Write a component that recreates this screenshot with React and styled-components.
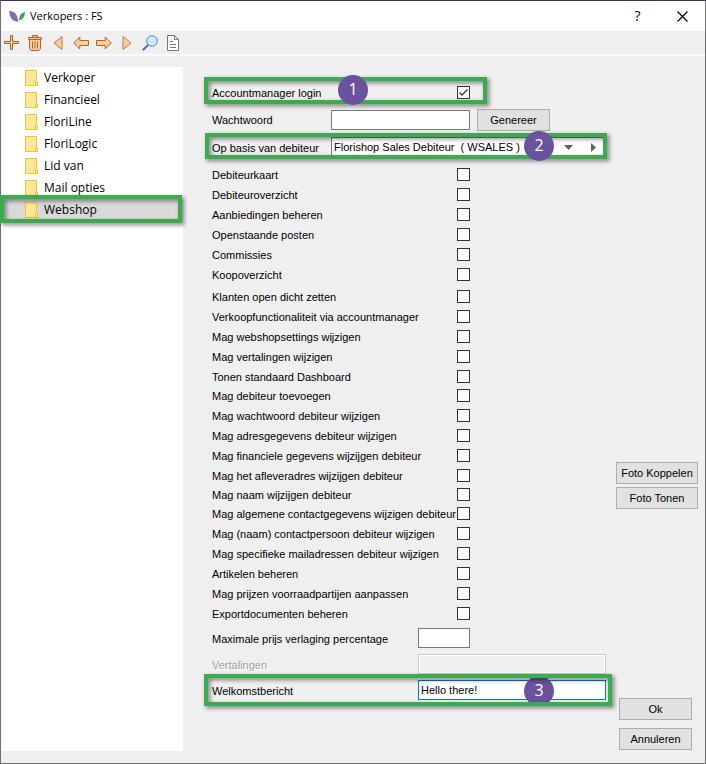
import React from "react";
import styled, { createGlobalStyle, css } from "styled-components";

const GlobalStyle = createGlobalStyle`
  *, *::before, *::after { box-sizing: border-box; }
  body { margin: 0; background: #efefef; }
  body, button, input, select { font: 11px/14px "Liberation Sans", Arial, sans-serif; color: #000; }
`;

const Window = styled.div`
  display: flex;
  flex-direction: column;
  min-height: 100vh;
  background: #efefef;
  border: 1px solid #707070;
  border-top-color: #3a2f4c;
`;

const TitleBar = styled.header`
  display: flex;
  align-items: center;
  height: 30px;
  padding-left: 8px;
  background: #fff;
`;

const Title = styled.h1`
  flex: 1;
  margin: 0 0 0 4px;
  font: 11px/16px "Open Sans", "Noto Sans", sans-serif;
`;

const CaptionButton = styled.button`
  display: grid;
  place-items: center;
  width: 45px;
  height: 30px;
  padding: 0;
  border: 0;
  background: none;
  font: 500 14px/16px "Open Sans", sans-serif;
`;

const Toolbar = styled.nav`
  display: flex;
  height: 25px;
  border-bottom: 2px solid #fbfbff;
`;

const ToolButton = styled.button`
  display: grid;
  place-items: center;
  width: 23px;
  height: 24px;
  padding: 0 2px 0 0;
  border: 0;
  background: none;
`;

const Body = styled.div`
  display: flex;
  flex: 1;
  padding: 11px 7px 12px 0;
`;

const Sidebar = styled.ul`
  width: 182px;
  flex: none;
  margin: 0;
  padding: 0;
  list-style: none;
  background: #fff;
`;

const SidebarItem = styled.li`
  position: relative;
`;

const SidebarButton = styled.button`
  display: flex;
  align-items: center;
  gap: 6px;
  width: 100%;
  height: 22px;
  padding: 0 0 0 24px;
  border: 0;
  background: ${(p) => (p.$selected ? "#d9d9d9" : "transparent")};
  font: 12px/16px "Open Sans", "Noto Sans", sans-serif;
  text-align: left;
`;

const Form = styled.form`
  flex: 1;
  min-width: 0;
  padding: 16px 0 0 29px;
`;

const Row = styled.div`
  position: relative;
  display: flex;
  align-items: flex-start;
  height: ${(p) => p.$height || 20}px;
  margin-top: ${(p) => p.$gap || 0}px;
`;

const Label = styled.label`
  flex: none;
  width: ${(p) => p.$width}px;
  padding-top: 3px;
  white-space: nowrap;
`;

const FieldLabel = styled(Label)`
  padding-top: 4px;
  ${(p) =>
    p.$disabled &&
    css`
      color: #a0a0a0;
      text-shadow: 1px 1px 0 #fff;
    `}
`;

const Checkbox = styled.input`
  appearance: none;
  flex: none;
  width: 13px;
  height: 13px;
  margin: 3px 0 0;
  border: 1px solid #333;
  background: #fff;
  &:checked {
    background: #fff
      url("data:image/svg+xml,%3Csvg xmlns='http://www.w3.org/2000/svg' viewBox='0 0 11 11'%3E%3Cpath d='M1.5 5.5L4 8L9.5 2.5' fill='none' stroke='%23333' stroke-width='1.3'/%3E%3C/svg%3E");
  }
`;

const Input = styled.input`
  width: ${(p) => p.$width}px;
  height: 20px;
  padding: 0 2px;
  border: 1px solid ${(p) => (p.$active ? "#0078d7" : "#7a7a7a")};
  background: #fff;
  outline: 0;
  &:disabled {
    border-color: #ccc;
    background: #efefef;
    box-shadow: inset 0 0 0 1px #fff;
  }
`;

const SelectBox = styled.div`
  display: flex;
  width: 274px;
  height: 20px;
  border: 1px solid #7a7a7a;
  background: #fff;
`;

const Select = styled.select`
  appearance: none;
  flex: 1;
  padding: 0 26px 0 2px;
  border: 0;
  background: url("data:image/svg+xml,%3Csvg xmlns='http://www.w3.org/2000/svg' width='9' height='5'%3E%3Cpath d='M0 0H9L4.5 5Z' fill='%23606060'/%3E%3C/svg%3E")
    no-repeat right 9px center;
`;

const NextButton = styled.button`
  display: grid;
  place-items: center;
  width: 22px;
  padding: 0;
  border: 0;
  background: none;
`;

const Button = styled.button`
  width: ${(p) => p.$width || 73}px;
  height: 22px;
  padding: 0;
  border: 1px solid #adadad;
  background: #e1e1e1;
  white-space: nowrap;
`;

const GenerateButton = styled(Button)`
  margin-left: 7px;
  margin-top: -1px;
`;

const Actions = styled.div`
  display: flex;
  flex-direction: column;
  align-items: flex-end;
  width: 82px;
  flex: none;
  padding-top: 395px;
`;

const PhotoActions = styled.div`
  display: grid;
  gap: 3px;
`;

const DialogActions = styled.div`
  display: grid;
  gap: 8px;
  margin: auto 6px 1px 0;
`;

const Callout = styled.div`
  position: absolute;
  z-index: 2;
  top: ${(p) => p.$top}px;
  left: ${(p) => p.$left}px;
  width: ${(p) => p.$width}px;
  height: ${(p) => p.$height}px;
  border: 4px solid #3aab4f;
  filter: drop-shadow(2px 2px 2px rgba(0, 0, 0, 0.5));
  pointer-events: none;
`;

const Badge = styled.span`
  position: absolute;
  z-index: ${(p) => (p.$under ? 1 : 3)};
  top: ${(p) => p.$top}px;
  left: ${(p) => p.$left}px;
  width: 30px;
  height: 30px;
  border-radius: 50%;
  background: #6b529f;
  color: #fff;
  font: 16px/29px "Open Sans", sans-serif;
  text-align: center;
`;

const Peach = ({ children, ...rest }) => (
  <svg width="16" height="16" fill="#ffcc99" stroke="#a9652c" {...rest}>
    {children}
  </svg>
);

const tools = [
  ["Toevoegen", <Peach><path d="M6.500.5h2v6h6v2h-6v6h-2v-6h-6v-2h6z" /></Peach>],
  ["Verwijderen", (
    <Peach>
      <path d="M2.500 4.500h11v9l-1.500 2H4l-1.500-2z" />
      <path d="M1.500 2.500h13v2h-13zM5.500 2.500v-2h5v2M5.500 6.500v7M8 6.500v7M10.500 6.500v7" />
    </Peach>
  )],
  ["Eerste", <Peach stroke="#b18045"><path d="M12 1.500v13L4 8z" /></Peach>],
  ["Vorige", <Peach><path d="M.8 8l6-6v3.500h8.700v5H6.800V14z" /></Peach>],
  ["Volgende", <Peach><path d="M15.200 8l-6-6v3.500H.5v5h8.700V14z" /></Peach>],
  ["Laatste", <Peach stroke="#b18045"><path d="M4 1.500v13l8-6.500z" /></Peach>],
  ["Zoeken", (
    <svg width="16" height="16" fill="none">
      <path d="M.8 15.200l5.700-5.700" stroke="#4874c8" strokeWidth="2" />
      <circle cx="10" cy="6" r="5.300" fill="#cbeaff" stroke="#5585cf" />
    </svg>
  )],
  ["Document", (
    <svg width="16" height="16" fill="#fff" stroke="#777">
      <path d="M2.500.5h7l4 4v11h-11zM9.500.5v4h4" />
      <path d="M5 6.500h3M5 9.500h6M5 12.500h6" />
    </svg>
  )],
];

const FolderIcon = () => (
  <svg width="13" height="16">
    <path d="M.5.500h11v10l1 1v4H.5z" fill="#ffe699" stroke="#edc52f" />
    <path d="M10.500 15.500v-4l1-1" fill="none" stroke="#edc52f" />
  </svg>
);

const Logo = () => (
  <svg width="17" height="13">
    <path d="M0 1Q8 0 9.500 12Q1 12 0 1Z" fill="#8e69ae" />
    <path d="M16 2Q10 3 10 10.500Q16 9 16 2Z" fill="#38a355" />
  </svg>
);

const sections = ["Verkoper", "Financieel", "FloriLine", "FloriLogic", "Lid van", "Mail opties", "Webshop"];

const permissions = [
  { text: "Debiteurkaart", gap: 8 },
  { text: "Debiteuroverzicht" },
  { text: "Aanbiedingen beheren" },
  { text: "Openstaande posten" },
  { text: "Commissies" },
  { text: "Koopoverzicht" },
  { text: "Klanten open dicht zetten", gap: 2 },
  { text: "Verkoopfunctionaliteit via accountmanager" },
  { text: "Mag webshopsettings wijzigen" },
  { text: "Mag vertalingen wijzigen" },
  { text: "Tonen standaard Dashboard", height: 19 },
  { text: "Mag debiteur toevoegen" },
  { text: "Mag wachtwoord debiteur wijzigen" },
  { text: "Mag adresgegevens debiteur wijzigen" },
  { text: "Mag financiele gegevens wijzijgen debiteur" },
  { text: "Mag het afleveradres wijzijgen debiteur", height: 19 },
  { text: "Mag naam wijzijgen debiteur", height: 19 },
  { text: "Mag algemene contactgegevens wijzigen debiteur" },
  { text: "Mag (naam) contactpersoon debiteur wijzigen" },
  { text: "Mag specifieke mailadressen debiteur wijzigen" },
  { text: "Artikelen beheren" },
  { text: "Mag prijzen voorraadpartijen aanpassen" },
  { text: "Exportdocumenten beheren" },
];

export default function App() {
  return (
    <>
      <GlobalStyle />
      <Window>
        <TitleBar>
          <Logo />
          <Title>Verkopers : FS</Title>
          <CaptionButton aria-label="Help">?</CaptionButton>
          <CaptionButton aria-label="Sluiten">
            <svg width="11" height="11" stroke="#000" strokeWidth="1.200">
              <path d="M.5.500l10 10M10.500.500l-10 10" />
            </svg>
          </CaptionButton>
        </TitleBar>
        <Toolbar>
          {tools.map(([name, icon]) => (
            <ToolButton key={name} aria-label={name}>{icon}</ToolButton>
          ))}
        </Toolbar>
        <Body>
          <Sidebar>
            {sections.map((name) => {
              const selected = name === "Webshop";
              return (
                <SidebarItem key={name}>
                  <SidebarButton $selected={selected}>
                    <FolderIcon />
                    {name}
                  </SidebarButton>
                  {selected && <Callout $top={-4} $left={-1} $width={182} $height={28} />}
                </SidebarItem>
              );
            })}
          </Sidebar>
          <Form onSubmit={(e) => e.preventDefault()}>
            <Row>
              <Label htmlFor="login" $width={245}>Accountmanager login</Label>
              <Checkbox id="login" type="checkbox" defaultChecked />
              <Callout $top={-6} $left={-8} $width={283} $height={27} />
              <Badge $top={-8} $left={126}>1</Badge>
            </Row>
            <Row $gap={7}>
              <Label htmlFor="password" $width={119}>Wachtwoord</Label>
              <Input id="password" $width={139} />
              <GenerateButton type="button">Genereer</GenerateButton>
            </Row>
            <Row $gap={7}>
              <FieldLabel htmlFor="debtor" $width={119}>Op basis van debiteur</FieldLabel>
              <SelectBox>
                <Select id="debtor">
                  <option>Florishop Sales Debiteur&nbsp; ( WSALES )</option>
                </Select>
                <NextButton type="button" aria-label="Openen">
                  <svg width="5" height="9"><path d="M0 0v9l5-4.500z" fill="#606060" /></svg>
                </NextButton>
              </SelectBox>
              <Callout $top={-4} $left={-7} $width={402} $height={26} />
              <Badge $top={-6} $left={312}>2</Badge>
            </Row>
            {permissions.map(({ text, gap, height }, i) => (
              <Row key={text} $gap={gap} $height={height}>
                <Label htmlFor={`permission-${i}`} $width={245}>{text}</Label>
                <Checkbox id={`permission-${i}`} type="checkbox" />
              </Row>
            ))}
            <Row $gap={4}>
              <FieldLabel htmlFor="discount" $width={206}>Maximale prijs verlaging percentage</FieldLabel>
              <Input id="discount" $width={52} />
            </Row>
            <Row $gap={6}>
              <FieldLabel htmlFor="translations" $width={206} $disabled>Vertalingen</FieldLabel>
              <Input id="translations" $width={188} disabled />
            </Row>
            <Row $gap={6}>
              <FieldLabel htmlFor="welcome" $width={206}>Welkomstbericht</FieldLabel>
              <Input id="welcome" $width={188} $active defaultValue="Hello there!" />
              <Callout $top={-6} $left={-8} $width={408} $height={32} />
              <Badge $top={-4} $left={312} $under>3</Badge>
            </Row>
          </Form>
          <Actions>
            <PhotoActions>
              <Button $width={82}>Foto Koppelen</Button>
              <Button $width={82}>Foto Tonen</Button>
            </PhotoActions>
            <DialogActions>
              <Button>Ok</Button>
              <Button>Annuleren</Button>
            </DialogActions>
          </Actions>
        </Body>
      </Window>
    </>
  );
}
